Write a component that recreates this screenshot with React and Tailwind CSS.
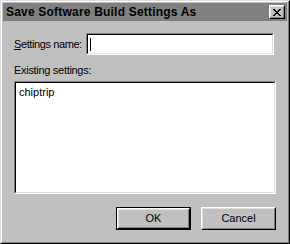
import React from 'react';

const font = { fontFamily: '"Liberation Sans", Arial, sans-serif' };

const Button = ({ children, isDefault }) => (
  <div className={`w-[75px] h-[23px] ${isDefault ? 'border border-black' : ''}`}>
    <div className="w-full h-full border-t border-l border-white border-r border-b border-r-black border-b-black">
      <div className="w-full h-full border-t border-l border-[#dfdfdf] border-r border-b border-r-[#808080] border-b-[#808080] bg-[#c0c0c0] flex items-center justify-center text-[11px] text-black">
        {children}
      </div>
    </div>
  </div>
);

const Sunken = ({ className, children }) => (
  <div className={`border-t border-l border-[#808080] border-r border-b border-r-white border-b-white ${className}`}>
    <div className="w-full h-full border-t border-l border-black border-r border-b border-r-[#dfdfdf] border-b-[#dfdfdf] bg-white">
      {children}
    </div>
  </div>
);

const App = () => {
  return (
    <div style={font} className="w-[290px] h-[244px] bg-[#c0c0c0] border-t border-l border-[#dfdfdf] border-r border-b border-r-black border-b-black">
      <div className="w-full h-full border-t border-l border-white border-r border-b border-r-[#808080] border-b-[#808080] p-px flex flex-col">
        {/* title bar */}
        <div className="h-[18px] bg-[#808080] flex items-center justify-between pl-[3px] pr-[2px]">
          <span className="text-[12px] font-bold text-black leading-none whitespace-nowrap tracking-[0.2px]">Save Software Build Settings As</span>
          <div className="w-[16px] h-[14px] border-t border-l border-white border-r border-b border-r-black border-b-black">
            <div className="w-full h-full border-t border-l border-[#dfdfdf] border-r border-b border-r-[#808080] border-b-[#808080] bg-[#c0c0c0] flex items-center justify-center">
              <svg width="8" height="7" viewBox="0 0 8 7">
                <path d="M0 0h2v1h1v1h2V1h1V0h2v1H7v1H6v1H5v1h1v1h1v1h1v1H6V6H5V5H3v1H2v1H0V6h1V5h1V4h1V3H2V2H1V1H0z" fill="black" />
              </svg>
            </div>
          </div>
        </div>

        {/* body */}
        <div className="flex-1 flex flex-col px-[11px] text-[11px] text-black">
          <div className="mt-[12px] flex items-center justify-between pr-[2px]">
            <label className="whitespace-nowrap tracking-[-0.4px]">
              <span className="underline">S</span>ettings name:
            </label>
            <Sunken className="w-[188px] h-[22px] shrink-0">
              <div className="h-full flex items-center pl-[2px]">
                <div className="w-px h-[13px] bg-black" />
              </div>
            </Sunken>
          </div>

          <div className="mt-[9px] leading-[13px] whitespace-nowrap tracking-[-0.3px]">Existing settings:</div>

          <Sunken className="mt-[4px] w-[262px] h-[113px]">
            <div className="pl-[3px] pt-[3px] leading-[13px]">chiptrip</div>
          </Sunken>

          <div className="mt-[13px] flex justify-end gap-[10px]">
            <Button isDefault>OK</Button>
            <Button>Cancel</Button>
          </div>
        </div>
      </div>
    </div>
  );
};

export default App;
